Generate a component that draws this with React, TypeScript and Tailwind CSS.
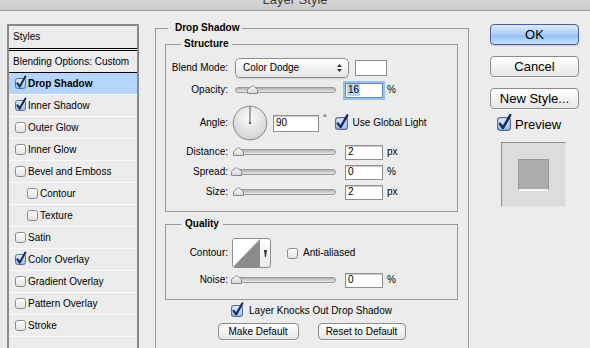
import React from "react";

function CheckBox({ checked = false, size = 11 }: { checked?: boolean; size?: number }) {
  return (
    <svg width={size} height={size} viewBox="0 0 11 11" className="shrink-0 overflow-visible">
      <defs>
        <linearGradient id="cb-off" x1="0" y1="0" x2="0" y2="1">
          <stop offset="0" stopColor="#ffffff" />
          <stop offset="1" stopColor="#e0e0e0" />
        </linearGradient>
        <linearGradient id="cb-on" x1="0" y1="0" x2="0" y2="1">
          <stop offset="0" stopColor="#e2eefc" />
          <stop offset="1" stopColor="#93bfee" />
        </linearGradient>
      </defs>
      <rect
        x="0.5"
        y="0.5"
        width="10"
        height="10"
        rx="2.2"
        fill={checked ? "url(#cb-on)" : "url(#cb-off)"}
        stroke={checked ? "#5b6d95" : "#8c8c8c"}
      />
      {checked && (
        <path
          d="M2.4 5.4 L4.7 8.6 L10.4 -1.4"
          fill="none"
          stroke="#1b2a55"
          strokeWidth="2"
          strokeLinecap="round"
          strokeLinejoin="round"
        />
      )}
    </svg>
  );
}

function Slider({ pos }: { pos: number }) {
  return (
    <div className="relative w-[101px] h-[16px] flex items-center shrink-0">
      <div className="w-full h-[6px] rounded-full border border-[#9b9b9b] bg-gradient-to-b from-[#b2b2b2] to-[#e8e8e8]" />
      <svg
        width="11"
        height="9"
        viewBox="0 0 11 9"
        className="absolute top-[3px]"
        style={{ left: pos - 5.5 }}
      >
        <defs>
          <linearGradient id="thumb" x1="0" y1="0" x2="0" y2="1">
            <stop offset="0" stopColor="#ffffff" />
            <stop offset="1" stopColor="#d4d4d4" />
          </linearGradient>
        </defs>
        <path d="M0.5 8.5 V4.3 L5.5 0.6 L10.5 4.3 V8.5 Z" fill="url(#thumb)" stroke="#8a8a8a" />
      </svg>
    </div>
  );
}

function Field({ value, className = "" }: { value: string; className?: string }) {
  return (
    <div
      className={`shrink-0 bg-white border border-[#8e8e8e] shadow-[inset_0_1px_1px_rgba(0,0,0,0.22)] flex items-center pl-[2px] leading-none ${className}`}
    >
      {value}
    </div>
  );
}

function Label({ children }: { children: React.ReactNode }) {
  return <div className="w-[62px] shrink-0 text-right leading-none">{children}</div>;
}

function StyleRow({
  label,
  checked = false,
  selected = false,
  indent = false,
}: {
  label?: string;
  checked?: boolean;
  selected?: boolean;
  indent?: boolean;
}) {
  return (
    <div
      className={`h-[22px] border-b border-[#fafafa] flex items-center gap-[2px] ${
        indent ? "pl-[18px]" : "pl-[6px]"
      } ${selected ? "bg-[#b6d5fe] font-bold" : ""}`}
    >
      {label !== undefined && (
        <>
          <CheckBox checked={checked} />
          <span className="leading-none">{label}</span>
        </>
      )}
    </div>
  );
}

function MacButton({
  children,
  className = "",
}: {
  children: React.ReactNode;
  className?: string;
}) {
  return (
    <div
      className={`shrink-0 rounded-[4px] border border-[#8c8c8c] bg-gradient-to-b from-[#ffffff] to-[#e6e6e6] shadow-[0_1px_0_rgba(255,255,255,0.8)] flex items-center justify-center leading-none ${className}`}
    >
      {children}
    </div>
  );
}

export default function App() {
  return (
    <div className="w-[590px] h-[348px] overflow-hidden bg-[#ececec] font-['Liberation_Sans',Arial,sans-serif] text-[10px] text-black">
      {/* title bar */}
      <div className="h-[11px] border-b border-[#9a9a9a] bg-gradient-to-b from-[#d6d6d6] to-[#cbcbcb] flex justify-center overflow-hidden">
        <span className="text-[13px] leading-[13px] mt-[-7px] text-[#3e3e3e]">Layer Style</span>
      </div>

      <div className="flex items-start">
        {/* Styles list */}
        <div className="ml-[7px] mt-[13px] w-[132px] h-[400px] border-2 border-b-0 border-[#8a8a8a] shrink-0">
          <div className="h-[22px] flex items-center pl-[4px] leading-none">Styles</div>
          <div className="h-[3px] border-y border-black" />
          <div className="h-[22px] border-b border-black flex items-center pl-[4px] leading-none">
            Blending Options: Custom
          </div>
          <StyleRow label="Drop Shadow" checked selected />
          <StyleRow label="Inner Shadow" checked />
          <StyleRow label="Outer Glow" />
          <StyleRow label="Inner Glow" />
          <StyleRow label="Bevel and Emboss" />
          <StyleRow label="Contour" indent />
          <StyleRow label="Texture" indent />
          <StyleRow label="Satin" />
          <StyleRow label="Color Overlay" checked />
          <StyleRow label="Gradient Overlay" />
          <StyleRow label="Pattern Overlay" />
          <StyleRow label="Stroke" />
          <StyleRow />
        </div>

        {/* Drop Shadow panel */}
        <fieldset className="ml-[16px] mt-[11px] w-[314px] shrink-0 border border-[#989898] pl-[9px] pr-[10px] pb-[20px] min-w-0">
          <legend className="ml-[3px] pl-[7px] pr-[3px] font-bold leading-[12px]">Drop Shadow</legend>

          {/* Structure */}
          <fieldset className="mt-[4px] border border-[#989898] pb-[11px] min-w-0">
            <legend className="ml-[15px] pl-[3px] pr-[4px] font-bold leading-[12px]">Structure</legend>

            <div className="mt-[8px] h-[20px] flex items-center">
              <Label>Blend Mode:</Label>
              <div className="ml-[7px] w-[114px] h-[20px] shrink-0 rounded-[5px] border border-[#8c8c8c] bg-gradient-to-b from-[#ffffff] to-[#e6e6e6] shadow-[0_1px_1px_rgba(0,0,0,0.12)] flex items-center justify-between pl-[7px] pr-[6px]">
                <span className="leading-none">Color Dodge</span>
                <svg width="5" height="10" viewBox="0 0 5 10">
                  <path d="M0 4 L2.5 1 L5 4 Z M0 6 L2.5 9 L5 6 Z" fill="#333" />
                </svg>
              </div>
              <div className="ml-[6px] w-[32px] h-[16px] shrink-0 bg-white border border-[#8c8c8c]" />
            </div>

            <div className="mt-[4px] h-[16px] flex items-center">
              <Label>Opacity:</Label>
              <div className="ml-[7px]">
                <Slider pos={17} />
              </div>
              <div className="ml-[9px] w-[38px] h-[15px] shrink-0 bg-white border border-[#5d88c4] shadow-[0_0_0_2px_#9cc0ee] flex items-center pl-[1px] leading-none">
                <span className="bg-[#b5d4fc] px-[1px] h-[12px] flex items-center">16</span>
              </div>
              <span className="ml-[4px] leading-none">%</span>
            </div>

            <div className="mt-[7px] h-[36px] flex items-center">
              <Label>Angle:</Label>
              <svg width="36" height="36" viewBox="0 0 36 36" className="ml-[4px] shrink-0">
                <defs>
                  <radialGradient id="dial" cx="0.5" cy="0.35" r="0.65">
                    <stop offset="0" stopColor="#fbfbfb" />
                    <stop offset="1" stopColor="#d2d2d2" />
                  </radialGradient>
                </defs>
                <circle cx="18" cy="18.5" r="17" fill="rgba(0,0,0,0.12)" />
                <circle cx="18" cy="18" r="16.8" fill="url(#dial)" stroke="#8a8a8a" />
                <line x1="18" y1="1.5" x2="18" y2="18" stroke="#555" strokeWidth="1" />
                <rect x="17" y="17" width="2" height="2" fill="#555" />
              </svg>
              <Field value="90" className="ml-[5px] w-[46px] h-[17px]" />
              <span className="ml-[4px] self-start mt-[9px] leading-none text-[9px]">°</span>
              <div className="ml-[8px]">
                <CheckBox checked size={13} />
              </div>
              <span className="ml-[5px] leading-none">Use Global Light</span>
            </div>

            <div className="mt-[3px] h-[16px] flex items-center">
              <Label>Distance:</Label>
              <div className="ml-[7px]">
                <Slider pos={3.5} />
              </div>
              <Field value="2" className="ml-[9px] w-[38px] h-[15px]" />
              <span className="ml-[4px] leading-none">px</span>
            </div>

            <div className="mt-[4px] h-[16px] flex items-center">
              <Label>Spread:</Label>
              <div className="ml-[7px]">
                <Slider pos={1} />
              </div>
              <Field value="0" className="ml-[9px] w-[38px] h-[15px]" />
              <span className="ml-[4px] leading-none">%</span>
            </div>

            <div className="mt-[4px] h-[16px] flex items-center">
              <Label>Size:</Label>
              <div className="ml-[7px]">
                <Slider pos={3.5} />
              </div>
              <Field value="2" className="ml-[9px] w-[38px] h-[15px]" />
              <span className="ml-[4px] leading-none">px</span>
            </div>
          </fieldset>

          {/* Quality */}
          <fieldset className="mt-[6px] border border-[#989898] pb-[11px] min-w-0">
            <legend className="ml-[15px] pl-[4px] pr-[4px] font-bold leading-[12px]">Quality</legend>

            <div className="mt-[8px] h-[30px] flex items-center">
              <Label>Contour:</Label>
              <div className="ml-[4px] w-[39px] h-[30px] shrink-0 rounded-[3px] border border-[#8c8c8c] bg-gradient-to-b from-[#ffffff] to-[#ebebeb] flex items-center overflow-hidden">
                <svg width="27" height="28" viewBox="0 0 27 28" className="shrink-0">
                  <rect x="0" y="0" width="27" height="28" fill="#ffffff" />
                  <path d="M0 28 L27 0 L27 28 Z" fill="#8c8c8c" />
                </svg>
                <svg width="11" height="28" viewBox="0 0 11 28" className="shrink-0">
                  <path d="M4 11 H7 L6 18 H5 Z" fill="#333" />
                </svg>
              </div>
              <div className="ml-[16px]">
                <CheckBox />
              </div>
              <span className="ml-[5px] leading-none">Anti-aliased</span>
            </div>

            <div className="mt-[4px] h-[16px] flex items-center">
              <Label>Noise:</Label>
              <div className="ml-[7px]">
                <Slider pos={1} />
              </div>
              <Field value="0" className="ml-[9px] w-[38px] h-[15px]" />
              <span className="ml-[4px] leading-none">%</span>
            </div>
          </fieldset>

          <div className="mt-[3px] h-[16px] flex items-center justify-center">
            <CheckBox checked size={12} />
            <span className="ml-[6px] leading-none">Layer Knocks Out Drop Shadow</span>
          </div>

          <div className="mt-[4px] flex justify-center gap-[19px]">
            <MacButton className="w-[81px] h-[17px]">Make Default</MacButton>
            <MacButton className="w-[88px] h-[17px]">Reset to Default</MacButton>
          </div>
        </fieldset>

        {/* Right column */}
        <div className="ml-[21px] mt-[13px] w-[89px] shrink-0 flex flex-col">
          <div className="h-[21px] rounded-[4px] border border-[#4d5f98] bg-[linear-gradient(#dcebfc,#a9cdf5_50%,#8ebff2_52%,#c6e2fc)] shadow-[0_1px_1px_rgba(0,0,0,0.15)] flex items-center justify-center text-[13px] leading-none">
            OK
          </div>
          <MacButton className="mt-[11px] h-[21px] text-[13px]">Cancel</MacButton>
          <MacButton className="mt-[11px] h-[21px] text-[13px]">New Style...</MacButton>
          <div className="mt-[7px] h-[16px] flex items-center pl-[7px]">
            <CheckBox checked size={14} />
            <span className="ml-[4px] text-[13px] leading-none">Preview</span>
          </div>
          <div className="mt-[10px] ml-[11px] w-[65px] h-[65px] bg-[#dcdcdc] border-l border-t border-[#8e8e8e] border-r border-b border-r-[#e4e4e4] border-b-[#e4e4e4] flex items-center justify-center">
            <div className="w-[31px] h-[32px] bg-[#acacac] border border-[#999999] border-b-2 border-b-[#f4f4f4]" />
          </div>
        </div>
      </div>
    </div>
  );
}
